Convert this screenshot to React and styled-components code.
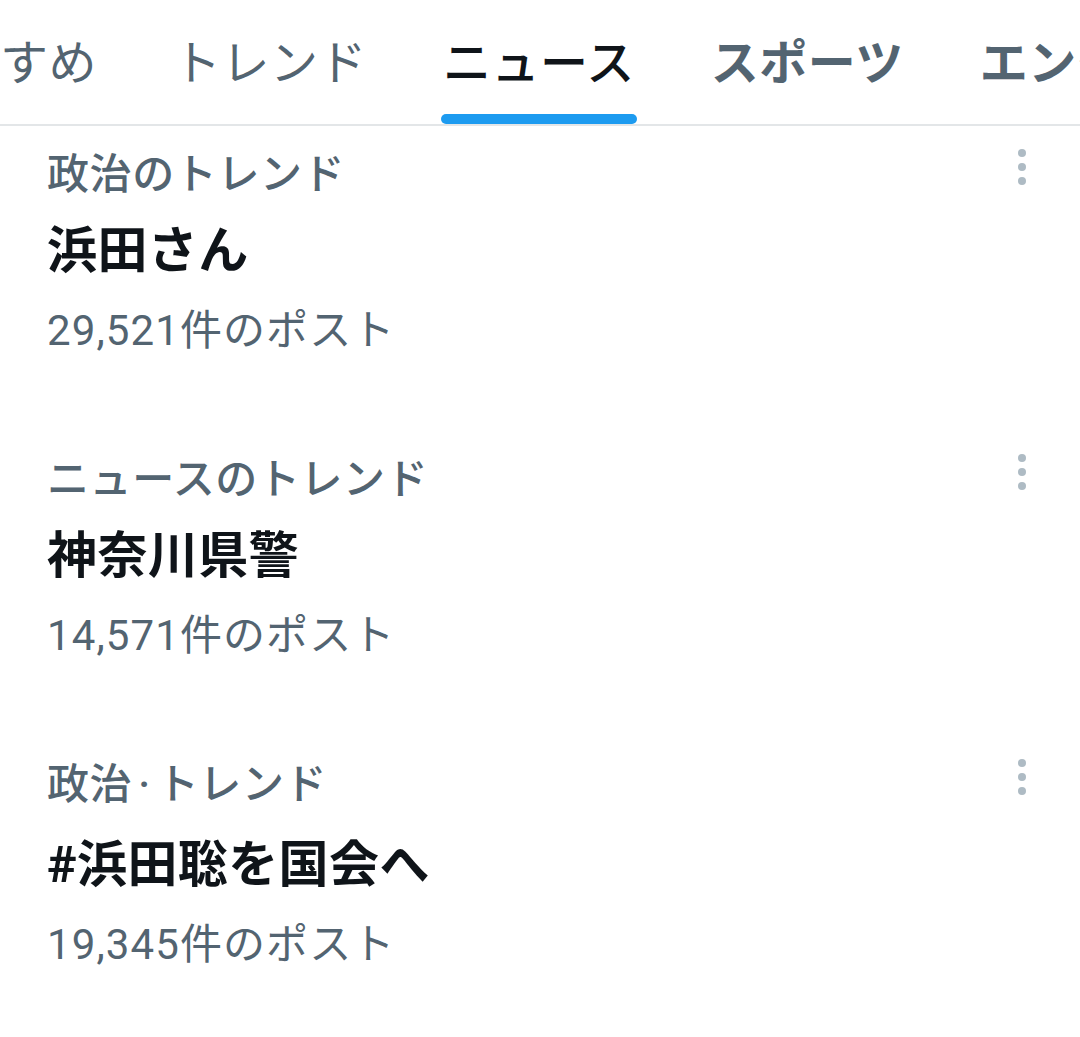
import React from "react";
import styled, { createGlobalStyle } from "styled-components";

const Global = createGlobalStyle`
  html, body { margin: 0; padding: 0; background: #ffffff; }
  body {
    font-family: Roboto, "Noto Sans CJK JP", "Noto Sans", sans-serif;
    -webkit-font-smoothing: antialiased;
  }
`;

const Page = styled.div`
  width: 1080px;
  min-height: 1037px;
  background: #fff;
  overflow: hidden;
`;

const TabBar = styled.nav`
  display: flex;
  border-bottom: 2px solid #e3e6e8;
  overflow: hidden;
  white-space: nowrap;
`;

const TabStrip = styled.div`
  display: flex;
  margin-left: -135px;
`;

const Tab = styled.div`
  display: flex;
  flex-direction: column;
  align-items: center;
  padding: 0 38px;
  height: 124px;
  flex-shrink: 0;
`;

const TabLabel = styled.span`
  margin-top: 23px;
  height: 72px;
  line-height: 72px;
  font-family: "Noto Sans CJK JP", sans-serif;
  font-size: 48px;
  letter-spacing: 0.5px;
  font-weight: ${(p) => p.$weight};
  color: ${(p) => (p.$active ? "#0f1419" : "#536471")};
`;

const Indicator = styled.div`
  margin-top: 19px;
  height: 10px;
  width: calc(100% + 4px);
  border-radius: 5px;
  background: ${(p) => (p.$active ? "#1d9bf0" : "transparent")};
`;

const List = styled.div`
  display: flex;
  flex-direction: column;
`;

const Trend = styled.div`
  display: flex;
  justify-content: space-between;
  align-items: flex-start;
  padding: 15px 45px 70px 47px;
`;

const Info = styled.div`
  display: flex;
  flex-direction: column;
  gap: 15px;
`;

const Category = styled.div`
  font-family: "Noto Sans CJK JP", sans-serif;
  font-size: 42px;
  letter-spacing: 0.6px;
  line-height: 60px;
  font-weight: 500;
  color: #536471;
`;

const Sep = styled.span`
  font-family: Roboto, sans-serif;
  margin: 0 6px;
`;

const Title = styled.div`
  font-family: Roboto, "Noto Sans CJK JP", sans-serif;
  font-size: 50px;
  letter-spacing: 0.4px;
  line-height: 70px;
  font-weight: 700;
  color: #0f1419;
`;

const Count = styled.div`
  font-family: Roboto, "Noto Sans CJK JP", sans-serif;
  font-size: 42px;
  letter-spacing: 1.1px;
  line-height: 60px;
  color: #536471;
`;

const MoreButton = styled.div`
  display: flex;
  flex-direction: column;
  gap: 6px;
  padding: 8px 9px;
`;

const Dot = styled.span`
  width: 8px;
  height: 8px;
  border-radius: 50%;
  background: #aebbc4;
`;

const tabs = [
  { label: "おすすめ", weight: 400 },
  { label: "トレンド", weight: 400 },
  { label: "ニュース", weight: 500, active: true },
  { label: "スポーツ", weight: 700 },
  { label: "エンタメ", weight: 700 },
];

const trends = [
  { category: ["政治のトレンド"], title: "浜田さん", count: "29,521件のポスト" },
  { category: ["ニュースのトレンド"], title: "神奈川県警", count: "14,571件のポスト" },
  { category: ["政治", "トレンド"], title: "#浜田聡を国会へ", count: "19,345件のポスト" },
];

export default function App() {
  return (
    <Page>
      <Global />
      <TabBar>
        <TabStrip>
          {tabs.map((t) => (
            <Tab key={t.label}>
              <TabLabel $active={t.active} $weight={t.weight}>{t.label}</TabLabel>
              <Indicator $active={t.active} />
            </Tab>
          ))}
        </TabStrip>
      </TabBar>
      <List>
        {trends.map((t) => (
          <Trend key={t.title}>
            <Info>
              <Category>
                {t.category.length > 1 ? (
                  <>
                    {t.category[0]}
                    <Sep>·</Sep>
                    {t.category[1]}
                  </>
                ) : (
                  t.category[0]
                )}
              </Category>
              <Title>{t.title}</Title>
              <Count>{t.count}</Count>
            </Info>
            <MoreButton>
              <Dot />
              <Dot />
              <Dot />
            </MoreButton>
          </Trend>
        ))}
      </List>
    </Page>
  );
}
